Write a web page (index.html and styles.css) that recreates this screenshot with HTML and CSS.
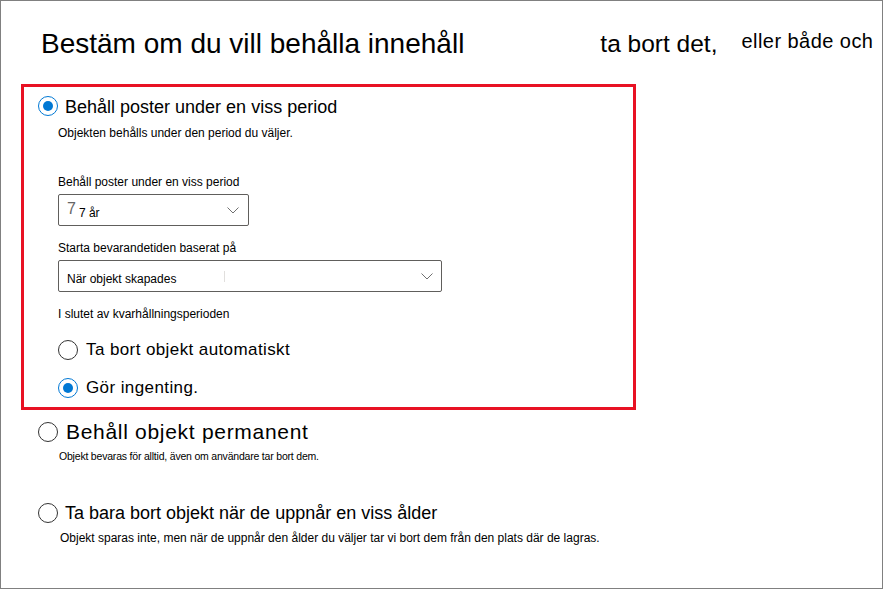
FILE: index.html
```html
<!DOCTYPE html>
<html lang="sv">
<head>
<meta charset="utf-8">
<title>Kvarhållning</title>
<link rel="stylesheet" href="styles.css">
</head>
<body>
<div class="frame">
  <header class="head">
    <h1 class="title">Bestäm om du vill behålla innehåll</h1>
    <span class="title-b">ta bort det,</span>
    <span class="title-c">eller både och</span>
  </header>

  <section class="box">
    <div class="opt opt-main"><span class="radio on"></span><span>Behåll poster under en viss period</span></div>
    <p class="desc">Objekten behålls under den period du väljer.</p>

    <div class="field f1">
      <div class="flabel">Behåll poster under en viss period</div>
      <div class="select s1">
        <span class="val"><span class="ghost">7</span>7 år</span>
        <svg class="chev" width="12" height="7" viewBox="0 0 12 7"><polyline points="0.5,0.5 6,6 11.5,0.5" fill="none" stroke="#707070" stroke-width="1"/></svg>
      </div>
    </div>

    <div class="field f2">
      <div class="flabel">Starta bevarandetiden baserat på</div>
      <div class="select s2">
        <span class="val">När objekt skapades</span>
        <span class="caret"></span>
        <svg class="chev" width="12" height="7" viewBox="0 0 12 7"><polyline points="0.5,0.5 6,6 11.5,0.5" fill="none" stroke="#707070" stroke-width="1"/></svg>
      </div>
    </div>

    <div class="endlabel">I slutet av kvarhållningsperioden</div>

    <div class="opt opt-sub first"><span class="radio"></span><span>Ta bort objekt automatiskt</span></div>
    <div class="opt opt-sub second"><span class="radio on"></span><span>Gör ingenting.</span></div>
  </section>

  <div class="opt opt-perm"><span class="radio"></span><span>Behåll objekt permanent</span></div>
  <p class="desc-perm">Objekt bevaras för alltid, även om användare tar bort dem.</p>

  <div class="opt opt-age"><span class="radio"></span><span>Ta bara bort objekt när de uppnår en viss ålder</span></div>
  <p class="desc-age">Objekt sparas inte, men när de uppnår den ålder du väljer tar vi bort dem från den plats där de lagras.</p>
</div>
</body>
</html>
```

FILE: styles.css
```css
body {
  margin: 0;
  background: #fff;
  font-family: "Liberation Sans", Arial, sans-serif;
  color: #000;
}

.frame {
  width: 883px;
  height: 589px;
  border: 1px solid #808080;
  box-sizing: border-box;
  background: #fff;
}

.head {
  display: flex;
  align-items: flex-start;
  height: 83px;
  padding: 23px 0 0 40px;
  box-sizing: border-box;
  white-space: nowrap;
}

.title {
  margin: 0;
  font-size: 28px;
  font-weight: 400;
  line-height: 40px;
}

.title-b {
  margin-left: 136px;
  font-size: 24.5px;
  line-height: 40px;
}

.title-c {
  margin-left: 24px;
  margin-top: -3px;
  font-size: 20px;
  letter-spacing: 0.45px;
  line-height: 40px;
}

.box {
  margin-left: 20px;
  width: 615px;
  border: 3px solid #e81123;
  box-sizing: border-box;
  padding: 8px 0 7px 0;
}

.opt {
  display: flex;
  align-items: center;
  white-space: nowrap;
}

.radio {
  flex: none;
  width: 20px;
  height: 20px;
  border-radius: 50%;
  border: 1px solid #333;
  box-sizing: border-box;
  display: flex;
  align-items: center;
  justify-content: center;
  background: #fff;
}

.radio.on {
  border-color: #0078d4;
}

.radio.on::after {
  content: "";
  width: 10px;
  height: 10px;
  border-radius: 50%;
  background: #0078d4;
}

.opt-main {
  padding-left: 14px;
  font-size: 18px;
  line-height: 24px;
}

.opt-main .radio {
  margin-right: 7px;
  margin-top: -2px;
}

.desc {
  margin: 6px 0 0 34px;
  font-size: 12px;
  line-height: 16px;
}

.field {
  margin-left: 34px;
}

.f1 { margin-top: 33px; }
.f2 { margin-top: 14px; }

.flabel {
  font-size: 12px;
  line-height: 16px;
  margin-bottom: 4px;
}

.select {
  height: 32px;
  box-sizing: border-box;
  border: 1px solid #605e5c;
  border-radius: 2px;
  display: flex;
  align-items: center;
  padding: 0 9px 0 8px;
  font-size: 12px;
  white-space: nowrap;
}

.s1 { width: 191px; }
.s2 { width: 384px; padding-right: 8px; }

.val {
  line-height: 16px;
  margin-top: 5px;
}

.ghost {
  font-size: 16px;
  line-height: 0;
  color: #666;
  margin-right: 3px;
  vertical-align: 3px;
}

.caret {
  width: 1px;
  height: 11px;
  background: #e1dfdd;
  margin-left: 48px;
}

.chev {
  margin-left: auto;
  flex: none;
}

.endlabel {
  margin: 14px 0 0 34px;
  font-size: 12px;
  line-height: 16px;
}

.opt-sub {
  padding-left: 34px;
  font-size: 17px;
  letter-spacing: 0.4px;
  line-height: 24px;
}

.opt-sub.first { margin-top: 16px; }
.opt-sub.second { margin-top: 14px; }

.opt-sub .radio { margin-right: 8px; }

.opt-perm {
  margin-top: 8px;
  padding-left: 37px;
  font-size: 21px;
  letter-spacing: 0.7px;
  line-height: 28px;
}

.opt-perm .radio { margin-right: 8px; }

.desc-perm {
  margin: 3px 0 0 58px;
  font-size: 10.5px;
  letter-spacing: -0.2px;
  line-height: 14px;
}

.opt-age {
  margin-top: 38px;
  padding-left: 37px;
  font-size: 18px;
  line-height: 24px;
}

.opt-age .radio { margin-right: 7px; }

.desc-age {
  margin: 5px 0 0 59px;
  font-size: 12px;
  line-height: 16px;
}
```
